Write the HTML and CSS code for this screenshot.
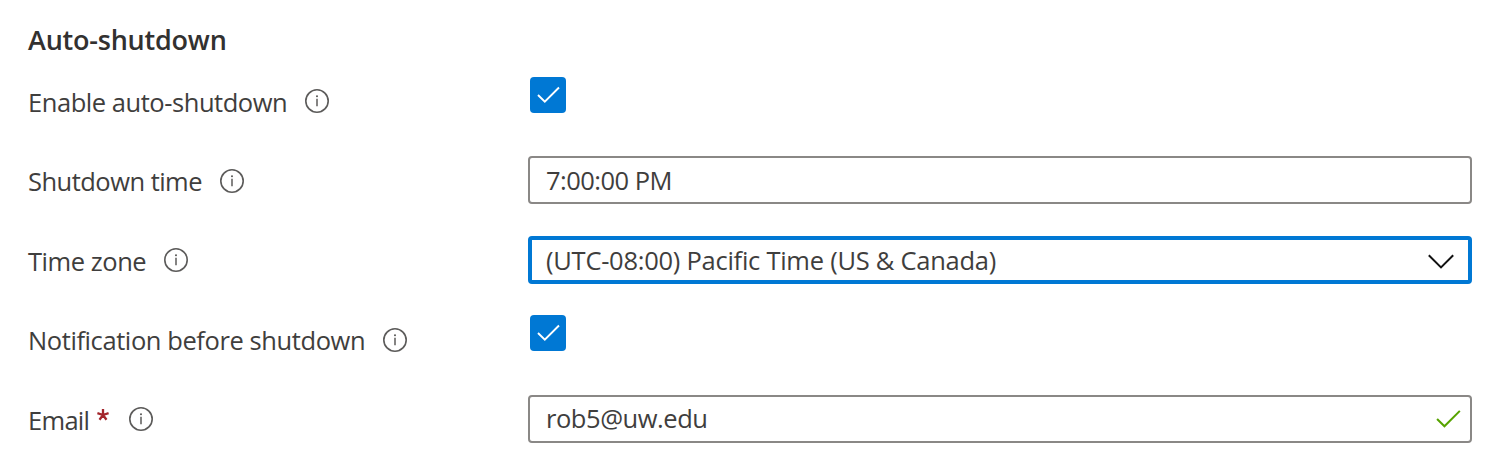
FILE: index.html
```html
<!DOCTYPE html>
<html lang="en">
<head>
<meta charset="utf-8">
<title>Auto-shutdown</title>
<link rel="stylesheet" href="styles.css">
</head>
<body>
<svg class="defs" aria-hidden="true">
  <symbol id="info" viewBox="0 0 26 26">
    <circle cx="13" cy="13" r="11.2" fill="none" stroke="currentColor" stroke-width="1.6"/>
    <path d="M13 10.8V18.2" stroke="currentColor" stroke-width="1.5"/>
    <circle cx="13" cy="8.2" r="1.05" fill="currentColor"/>
  </symbol>
  <symbol id="tick" viewBox="0 0 24 18">
    <path d="M1 9L7.8 15.7L22 1.5" fill="none" stroke="currentColor" stroke-width="1.9"/>
  </symbol>
</svg>
<main class="form">
  <h2 class="title">Auto-shutdown</h2>
  <div class="rows">
    <div class="row">
      <div class="label"><span>Enable auto-shutdown</span><svg class="info"><use href="#info"/></svg></div>
      <div class="check"><svg class="check-tick"><use href="#tick"/></svg></div>
    </div>
    <div class="row">
      <div class="label"><span class="t-shutdown">Shutdown time</span><svg class="info low"><use href="#info"/></svg></div>
      <div class="field"><span class="t-clock">7:00:00 PM</span></div>
    </div>
    <div class="row">
      <div class="label"><span>Time zone</span><svg class="info"><use href="#info"/></svg></div>
      <div class="field focused"><span class="t-utc">(UTC-08:00) Pacific Time (US &amp; Canada)</span><svg class="chevron" viewBox="0 0 28 18"><path d="M1.8 2.2L14 14.4L26.2 2.2" fill="none" stroke="currentColor" stroke-width="2"/></svg></div>
    </div>
    <div class="row">
      <div class="label"><span class="t-notify">Notification before shutdown</span><svg class="info low"><use href="#info"/></svg></div>
      <div class="check"><svg class="check-tick"><use href="#tick"/></svg></div>
    </div>
    <div class="row">
      <div class="label"><span class="t-email">Email</span><svg class="required" viewBox="0 0 14 14"><path d="M7 7V1M7 7L1.4 5.2M7 7L3.5 11.8M7 7L10.5 11.8M7 7L12.6 5.2" fill="none" stroke="currentColor" stroke-width="2.3"/></svg><svg class="info"><use href="#info"/></svg></div>
      <div class="field"><span class="t-address">rob5@uw.edu</span><svg class="valid"><use href="#tick"/></svg></div>
    </div>
  </div>
</main>
</body>
</html>
```
FILE: styles.css
```css
* { box-sizing: border-box; }
body {
  margin: 0;
  background: #fff;
  color: #3f3e3d;
  font: 400 25.5px/36px "Open Sans", "Noto Sans", sans-serif;
  letter-spacing: -0.45px;
  white-space: nowrap;
}
svg { display: block; flex: none; }
.defs { position: absolute; width: 0; height: 0; }
.form { padding: 22px 16px 0 28px; }
.title {
  margin: 0;
  height: 55px;
  color: #323130;
  font-size: 27px;
  font-weight: 600;
  letter-spacing: -0.22px;
}
.rows { display: grid; grid-template-rows: 79px 80px 79px 80px 48px; }
.row { display: grid; grid-template-columns: 500px 1fr; align-items: start; }
.label { display: flex; height: 48px; padding-top: 7px; }
.info { width: 26px; height: 26px; margin: 4px 0 0 17px; color: #5c5b5a; }
.low { margin-top: 5px; }
.required { width: 14px; height: 14px; margin: 6px 1px 0 7px; color: #a4262c; }
.t-shutdown { letter-spacing: -0.52px; }
.t-notify { letter-spacing: -0.41px; }
.t-email { letter-spacing: -0.7px; }
.t-clock { letter-spacing: -0.52px; }
.t-utc { letter-spacing: -0.26px; }
.check {
  display: grid;
  place-items: center;
  width: 36px;
  height: 36px;
  margin-left: 2px;
  border-radius: 4px;
  background: #0078d4;
  color: #fff;
}
.check-tick { width: 24px; height: 18px; margin-left: 1px; }
.field {
  display: flex;
  align-items: center;
  justify-content: space-between;
  height: 48px;
  padding: 0 8px 0 16px;
  border: 2px solid #8a8886;
  border-radius: 4px;
}
.focused { border: 4px solid #0078d4; padding: 0 13px 0 14px; }
.chevron { width: 28px; height: 18px; margin-top: 3px; color: #111; }
.t-address { margin-top: -3px; }
.valid { width: 26px; height: 20px; color: #57a300; }
```
